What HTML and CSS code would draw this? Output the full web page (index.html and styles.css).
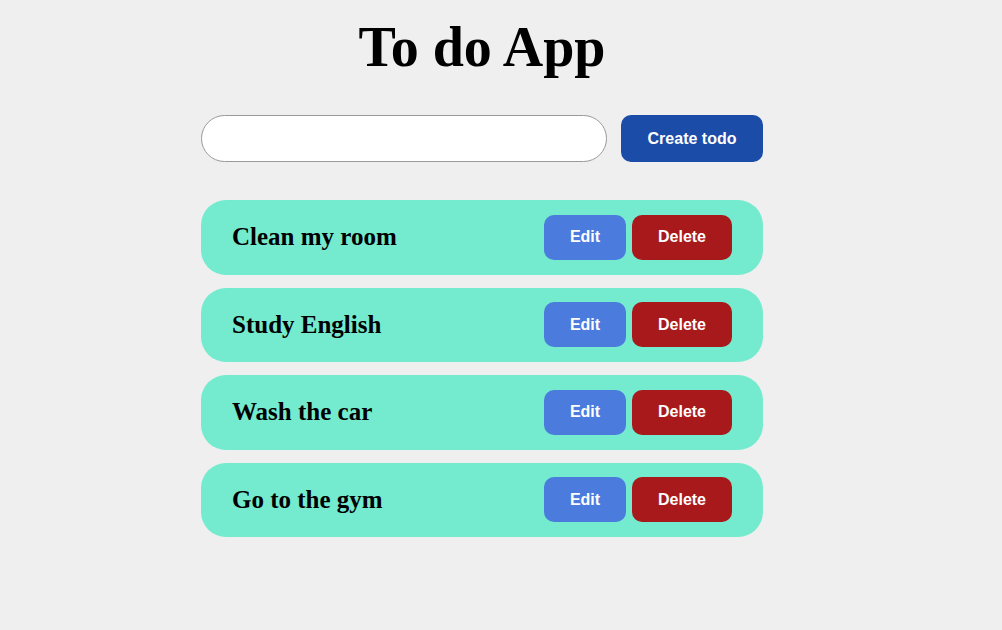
FILE: index.html
```html
<!DOCTYPE html>
<html>
<head>
<meta charset="utf-8">
<link rel="stylesheet" href="styles.css">
</head>
<body>
<main class="app">
  <h1 class="title">To do App</h1>
  <form class="create">
    <input class="create-input" type="text">
    <button class="btn btn-create" type="button">Create todo</button>
  </form>
  <ul class="list">
    <li class="item"><h2 class="item-text">Clean my room</h2><div class="actions"><button class="btn btn-edit">Edit</button><button class="btn btn-delete">Delete</button></div></li>
    <li class="item"><h2 class="item-text">Study English</h2><div class="actions"><button class="btn btn-edit">Edit</button><button class="btn btn-delete">Delete</button></div></li>
    <li class="item"><h2 class="item-text">Wash the car</h2><div class="actions"><button class="btn btn-edit">Edit</button><button class="btn btn-delete">Delete</button></div></li>
    <li class="item"><h2 class="item-text">Go to the gym</h2><div class="actions"><button class="btn btn-edit">Edit</button><button class="btn btn-delete">Delete</button></div></li>
  </ul>
</main>
</body>
</html>
```
FILE: styles.css
```css
html, body {
  margin: 0;
  padding: 0;
  background: #efefef;
}
body {
  font-family: "Liberation Serif", "Times New Roman", serif;
}
.app {
  width: 562px;
  margin-left: 201px;
  display: flex;
  flex-direction: column;
}
.title {
  margin: 14px 0 0;
  text-align: center;
  font-size: 56px;
  font-weight: bold;
  line-height: 66px;
}
.create {
  display: flex;
  gap: 14px;
  margin-top: 35px;
}
.create-input {
  box-sizing: border-box;
  width: 406px;
  height: 47px;
  border: 1px solid #9a9a9a;
  border-radius: 23.5px;
  background: #fff;
  padding: 0 16px;
  font-size: 16px;
}
.btn {
  border: none;
  color: #fff;
  font-family: "Liberation Sans", Arial, sans-serif;
  font-weight: bold;
  font-size: 16px;
  border-radius: 10px;
  padding: 0;
}
.btn-create {
  width: 142px;
  height: 47px;
  background: #1b4ca8;
}
.list {
  list-style: none;
  margin: 38px 0 0;
  padding: 0;
  display: flex;
  flex-direction: column;
  gap: 13px;
}
.item {
  box-sizing: border-box;
  height: 74.5px;
  background: #74ebce;
  border-radius: 25px;
  display: flex;
  align-items: center;
  justify-content: space-between;
  padding: 0 31px;
}
.item-text {
  margin: 0;
  font-size: 25px;
  font-weight: bold;
}
.actions {
  display: flex;
  gap: 6px;
}
.btn-edit {
  width: 82px;
  height: 45px;
  background: #4a7bdd;
}
.btn-delete {
  width: 100px;
  height: 45px;
  background: #a8191b;
}
```
